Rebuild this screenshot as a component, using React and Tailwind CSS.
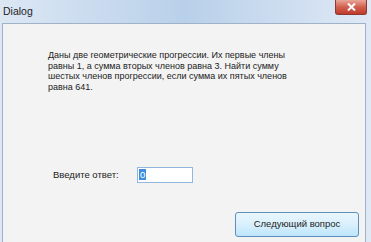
export default function App() {
  const lines = [
    'Даны две геометрические прогрессии. Их первые члены',
    'равны 1, а сумма вторых членов равна 3. Найти сумму',
    'шестых членов прогрессии, если сумма их пятых членов',
    'равна 641.',
  ]

  return (
    <div
      className="relative w-[371px] h-[242px] overflow-hidden flex flex-col bg-gradient-to-r from-[#dce7f4] via-[#b9d0ea] to-[#dfe9f5]"
      style={{ fontFamily: '"Liberation Sans", Arial, sans-serif' }}
    >
      {/* title bar */}
      <div className="h-[23px] shrink-0 flex items-center pl-[3px] text-[10.5px] text-[#1e1e1e]">
        Dialog
      </div>
      <div className="absolute top-0 right-[4px] w-[32px] h-[15px] rounded-b-[3px] border border-t-0 border-[#8c3a30] bg-gradient-to-b from-[#e9a598] via-[#d1604f] to-[#c0392a] flex items-center justify-center">
        <svg width="9" height="8" viewBox="0 0 9 8">
          <path d="M1 0.5 L8 7.5 M8 0.5 L1 7.5" stroke="#ffffff" strokeWidth="2" />
        </svg>
      </div>

      {/* client area */}
      <div className="flex-1 ml-[2px] mr-[5px] border border-b-0 border-[#9fb2c8] bg-[#f3f3f3] text-[9.5px] text-[#222222] flex flex-col">
        <div className="pl-[45px] pt-[26px] text-[9px] leading-[10.7px]">
          {lines.map((l) => (
            <div key={l} className="whitespace-nowrap">{l}</div>
          ))}
        </div>

        <div className="mt-[74px] pl-[50px] flex items-center">
          <span className="w-[84px] whitespace-nowrap">Введите ответ:</span>
          <div className="w-[56px] h-[16px] border border-[#93b6dc] bg-white flex items-center pl-[1px]">
            <span className="bg-[#3f8fde] text-white px-[1px] leading-[11px]">0</span>
          </div>
        </div>

        <div className="mt-[29px] flex justify-end pr-[6px]">
          <div className="w-[124px] h-[25px] rounded-[3px] border border-[#5d8fba] bg-gradient-to-b from-[#eaf6fd] via-[#d9f0fc] to-[#bde5fb] flex items-center justify-center whitespace-nowrap">
            Следующий вопрос
          </div>
        </div>
      </div>
    </div>
  )
}
